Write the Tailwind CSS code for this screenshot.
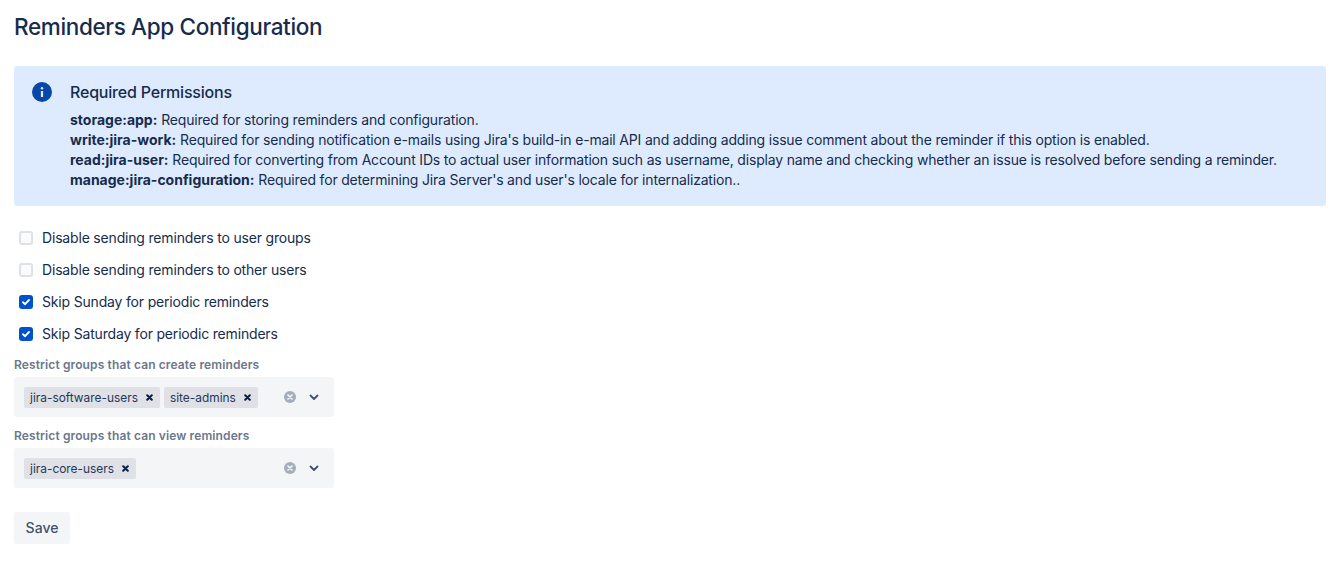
<!DOCTYPE html>
<html lang="en">
<head>
  <meta charset="UTF-8">
  <title>Reminders App Configuration</title>
  <script src="https://cdn.jsdelivr.net/npm/@tailwindcss/browser@4"></script>
</head>
<body class="bg-white text-[#172B4D] text-[14px] leading-5 tracking-[-0.18px] font-['Inter',sans-serif]">
  <div class="pl-[14px] pr-[12px] pt-[12px]">
    <h1 class="text-[22.5px] leading-[30px] font-medium tracking-[-0.35px] h-[54px]">Reminders App Configuration</h1>

    <div class="bg-[#DEEBFF] rounded-[3px] h-[140px] flex p-[16px]">
      <div class="w-[40px] shrink-0">
        <svg class="w-[24px] h-[24px]" viewBox="0 0 24 24">
          <circle cx="12" cy="10" r="10" fill="#0747A6"/>
          <rect x="10.9" y="9" width="2.2" height="6" rx="0.5" fill="#DEEBFF"/>
          <circle cx="12" cy="6.2" r="1.2" fill="#DEEBFF"/>
        </svg>
      </div>
      <div>
        <h2 class="text-[16px] leading-5 font-medium tracking-[-0.2px]">Required Permissions</h2>
        <div class="mt-[8px]">
          <p><b class="font-bold tracking-normal">storage:app:</b> Required for storing reminders and configuration.</p>
          <p><b class="font-bold tracking-normal">write:jira-work:</b> Required for sending notification e-mails using Jira's build-in e-mail API and adding adding issue comment about the reminder if this option is enabled.</p>
          <p><b class="font-bold tracking-normal">read:jira-user:</b> Required for converting from Account IDs to actual user information such as username, display name and checking whether an issue is resolved before sending a reminder.</p>
          <p><b class="font-bold tracking-normal">manage:jira-configuration:</b> Required for determining Jira Server's and user's locale for internalization..</p>
        </div>
      </div>
    </div>

    <div class="mt-[16px] flex flex-col">
      <label class="h-[32px] flex items-center pl-[5px] gap-[9px]">
        <span class="w-[14px] h-[14px] rounded-[3px] bg-[#FAFBFC] border-2 border-[#DFE1E6]"></span>
        <span>Disable sending reminders to user groups</span>
      </label>
      <label class="h-[32px] flex items-center pl-[5px] gap-[9px]">
        <span class="w-[14px] h-[14px] rounded-[3px] bg-[#FAFBFC] border-2 border-[#DFE1E6]"></span>
        <span>Disable sending reminders to other users</span>
      </label>
      <label class="h-[32px] flex items-center pl-[5px] gap-[9px]">
        <span class="w-[14px] h-[14px] rounded-[3px] bg-[#0052CC] flex items-center justify-center">
          <svg class="w-[10px] h-[10px]" viewBox="0 0 10 10" fill="none" stroke="#fff" stroke-width="1.9" stroke-linecap="round" stroke-linejoin="round"><path d="M2 5.2l2.1 2L8 3"/></svg>
        </span>
        <span>Skip Sunday for periodic reminders</span>
      </label>
      <label class="h-[32px] flex items-center pl-[5px] gap-[9px]">
        <span class="w-[14px] h-[14px] rounded-[3px] bg-[#0052CC] flex items-center justify-center">
          <svg class="w-[10px] h-[10px]" viewBox="0 0 10 10" fill="none" stroke="#fff" stroke-width="1.9" stroke-linecap="round" stroke-linejoin="round"><path d="M2 5.2l2.1 2L8 3"/></svg>
        </span>
        <span>Skip Saturday for periodic reminders</span>
      </label>
    </div>

    <div class="mt-[7px] text-[12px] leading-4 font-semibold tracking-[0.12px] text-[#6B778C] h-[20px]">Restrict groups that can create reminders</div>
    <div class="w-[320px] h-[40px] bg-[#F4F5F7] rounded-[3px] flex items-center pl-[10px]">
      <div class="flex-1 flex gap-[4px]">
        <span class="h-[21px] bg-[#DFE1E6] rounded-[2px] flex items-center pl-[6px] pt-[1px] text-[11.9px] tracking-normal text-[#253858]">jira-software-users<svg class="w-[7px] h-[7px] ml-[8.5px] mr-[6.5px] -mt-[1px]" viewBox="0 0 7 7" stroke="#091E42" stroke-width="2" stroke-linecap="round"><path d="M1.2 1.2l4.6 4.6M5.8 1.2L1.2 5.8"/></svg></span>
        <span class="h-[21px] bg-[#DFE1E6] rounded-[2px] flex items-center pl-[6px] pt-[1px] text-[11.9px] tracking-normal text-[#253858]">site-admins<svg class="w-[7px] h-[7px] ml-[8.5px] mr-[6.5px] -mt-[1px]" viewBox="0 0 7 7" stroke="#091E42" stroke-width="2" stroke-linecap="round"><path d="M1.2 1.2l4.6 4.6M5.8 1.2L1.2 5.8"/></svg></span>
      </div>
      <svg class="w-[12px] h-[12px] mr-[13px]" viewBox="0 0 12 12"><circle cx="6" cy="6" r="6" fill="#A5ADBA"/><path d="M4 4l4 4M8 4l-4 4" stroke="#F4F5F7" stroke-width="1.7" stroke-linecap="round"/></svg>
      <svg class="w-[10px] h-[7px] mr-[15px]" viewBox="0 0 10 7" fill="none" stroke="#42526E" stroke-width="1.8" stroke-linecap="round" stroke-linejoin="round"><path d="M1.5 1.5L5 5l3.5-3.5"/></svg>
    </div>

    <div class="mt-[11px] text-[12px] leading-4 font-semibold tracking-[0.12px] text-[#6B778C] h-[20px]">Restrict groups that can view reminders</div>
    <div class="w-[320px] h-[40px] bg-[#F4F5F7] rounded-[3px] flex items-center pl-[10px]">
      <div class="flex-1 flex gap-[4px]">
        <span class="h-[21px] bg-[#DFE1E6] rounded-[2px] flex items-center pl-[6px] pt-[1px] text-[11.9px] tracking-normal text-[#253858]">jira-core-users<svg class="w-[7px] h-[7px] ml-[8.5px] mr-[6.5px] -mt-[1px]" viewBox="0 0 7 7" stroke="#091E42" stroke-width="2" stroke-linecap="round"><path d="M1.2 1.2l4.6 4.6M5.8 1.2L1.2 5.8"/></svg></span>
      </div>
      <svg class="w-[12px] h-[12px] mr-[13px]" viewBox="0 0 12 12"><circle cx="6" cy="6" r="6" fill="#A5ADBA"/><path d="M4 4l4 4M8 4l-4 4" stroke="#F4F5F7" stroke-width="1.7" stroke-linecap="round"/></svg>
      <svg class="w-[10px] h-[7px] mr-[15px]" viewBox="0 0 10 7" fill="none" stroke="#42526E" stroke-width="1.8" stroke-linecap="round" stroke-linejoin="round"><path d="M1.5 1.5L5 5l3.5-3.5"/></svg>
    </div>

    <button class="mt-[24px] h-[32px] w-[56px] bg-[#F4F5F7] rounded-[3px] font-medium tracking-normal text-[#42526E] block">Save</button>
  </div>
</body>
</html>
